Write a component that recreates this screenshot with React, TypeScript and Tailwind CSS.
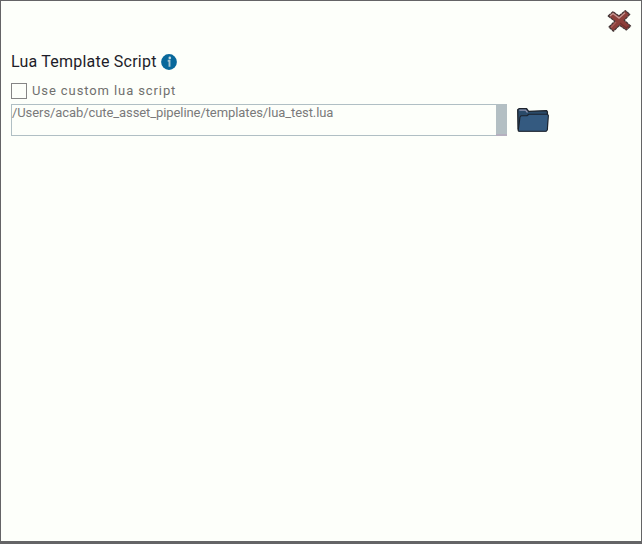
function CloseIcon() {
  return (
    <svg width="26" height="24" viewBox="0 0 26 24">
      <path d="M2.2 7 7 2.6 13 7 19.3 1.6 23.8 5.4 18.2 11.2 24.6 17 20.3 21 13.6 16.2 7.4 22.2 3 18 8.8 12.2z" fill="#8d3f3a" stroke="#413536" strokeWidth="1.2" strokeDasharray="3 .5" strokeLinejoin="round" />
      <path d="m4 7 3-2.5 6 4.6 6-5.3" fill="none" stroke="#c79a96" strokeWidth="1.2" />
      <path d="m5 18.5 5-5.5" fill="none" stroke="#a6605b" strokeWidth="1.2" />
      <path d="m14 14 6.3 5 2.2-2" fill="none" stroke="#752f2d" strokeWidth="1.2" />
    </svg>
  );
}

function InfoIcon() {
  return (
    <svg width="16" height="16" viewBox="0 0 16 16">
      <circle cx="8" cy="8" r="7.9" fill="#08689b" />
      <circle cx="8.8" cy="3.9" r="1.3" fill="#c5d9df" />
      <path d="M6.7 6.7h1.8v6" fill="none" stroke="#a9c6d2" strokeWidth="1.9" />
    </svg>
  );
}

function FolderIcon() {
  return (
    <svg width="34" height="26" viewBox="0 0 34 26">
      <path d="M2 22 1.7 2.8 3 1.7h7.6l2 2.6 18-.7.8 1.2V22l-2 1.8H3z" fill="#2a4a69" stroke="#1e242d" strokeWidth="1.3" strokeLinejoin="round" />
      <path d="M3.3 3.2h6.2l2 2.3" fill="none" stroke="#9295b0" strokeWidth="1.2" />
      <path d="M2.2 23.7 4 10l1.2-1.3h5.7l2-1.5h18.5l1 1.3L31.3 23l-1 1.2H3z" fill="#345a80" stroke="#1b222c" strokeWidth="1.1" strokeLinejoin="round" />
    </svg>
  );
}

export default function App() {
  return (
    <main className="h-[544px] w-[642px] border border-b-[3px] border-[#646466] bg-[#fdfffa] pl-[10px] font-['Roboto',sans-serif]">
      <div className="flex h-[50px] justify-end pt-[8px] pr-[9px]">
        <button aria-label="Close" className="h-6"><CloseIcon /></button>
      </div>
      <div className="flex h-[22px] items-center gap-[5px]">
        <h1 className="w-[145px] text-[16px] leading-5 tracking-[0.22px] whitespace-nowrap text-[#1d1d29]">Lua Template Script</h1>
        <InfoIcon />
      </div>
      <label className="mt-[10px] flex h-[16px] items-center gap-[5px]">
        <input type="checkbox" className="h-4 w-4 appearance-none border border-[#858585] bg-[#fdfffa]" />
        <span className="text-[13px] leading-4 tracking-[0.9px] whitespace-nowrap text-[#70706e]">Use custom lua script</span>
      </label>
      <div className="mt-[5px] flex gap-[9px]">
        <div className="flex h-8 w-[496px] border border-r-0 border-[#b0bfc4]">
          <div className="flex-1 text-[13px] leading-4 tracking-[-0.085px] whitespace-nowrap text-[#7a7a7a]">/Users/acab/cute_asset_pipeline/templates/lua_test.lua</div>
          <div className="-my-px w-[11px] border-b-2 border-[#b5b0bf] bg-[#b3bfc3]" />
        </div>
        <button aria-label="Browse" className="mt-[3px] h-[26px]"><FolderIcon /></button>
      </div>
    </main>
  );
}
